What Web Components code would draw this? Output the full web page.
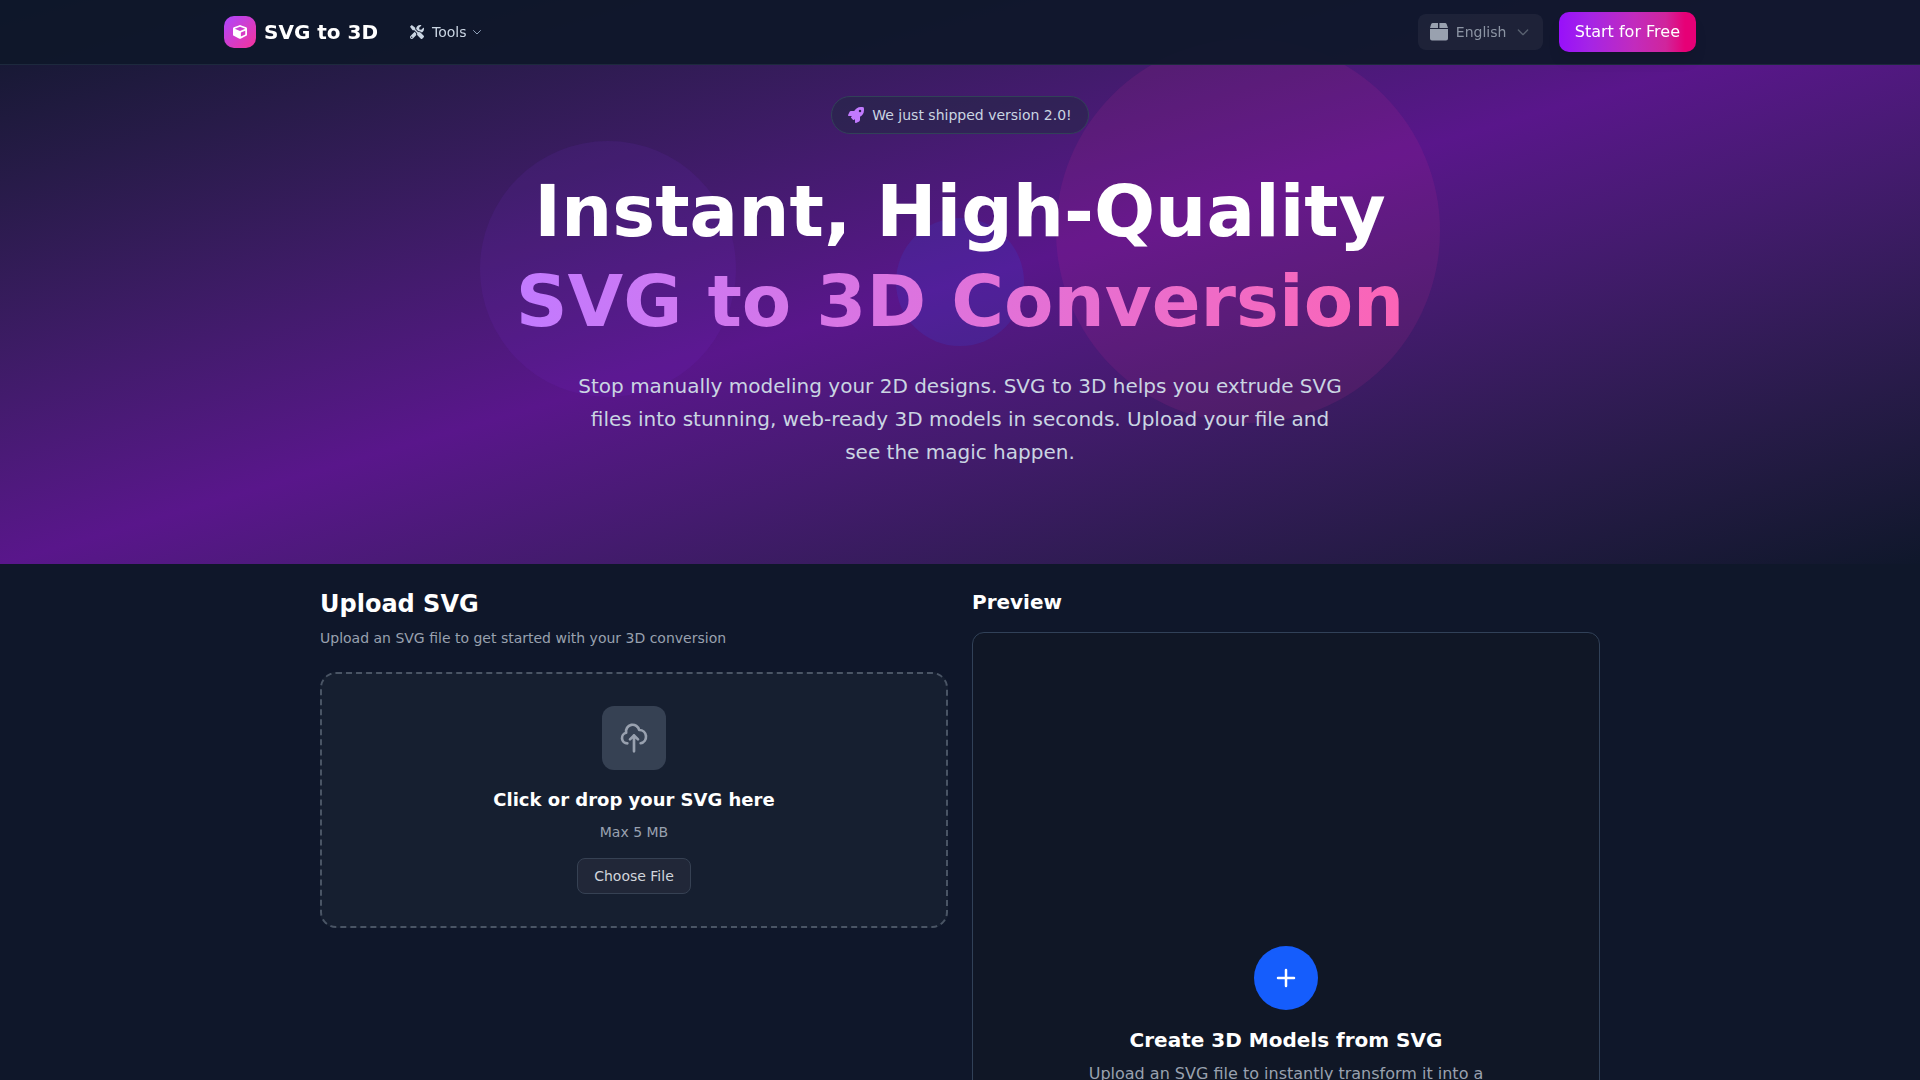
<!DOCTYPE html>
<html lang="en">
<head>
<meta charset="utf-8">
<meta name="viewport" content="width=device-width, initial-scale=1">
<title>SVG to 3D</title>
<style>
  body {
    margin: 0;
    background: #0f172a;
    color: #fff;
    font-family: "DejaVu Sans", sans-serif;
    font-size: 16px;
    line-height: 24px;
  }
</style>
</head>
<body>
<site-header></site-header>
<main>
  <hero-banner>
    <span slot="badge">We just shipped version 2.0!</span>
    <span slot="title">Instant, High-Quality</span>
    <span slot="accent">SVG to 3D Conversion</span>
    Stop manually modeling your 2D designs. SVG to 3D helps you extrude SVG files into stunning, web-ready 3D models in seconds. Upload your file and see the magic happen.
  </hero-banner>
  <converter-workspace>
    <upload-panel slot="upload"></upload-panel>
    <preview-panel slot="preview"></preview-panel>
  </converter-workspace>
</main>

<script>
// All icons used by the page: viewBox + markup
const ICONS = {
  cube: ['0 0 512 512', '<path fill="currentColor" d="M239.1 6.3l-208 78c-18.7 7-31.1 25-31.1 45v225.1c0 18.2 10.3 34.8 26.5 42.9l208 104c13.5 6.8 29.4 6.8 42.9 0l208-104c16.3-8.1 26.5-24.8 26.5-42.9V129.3c0-20-12.4-37.9-31.1-44.9l-208-78C262 2.2 250 2.2 239.1 6.3zM256 68.4l192 72v1.1l-192 78-192-78v-1.1l192-72zm32 356V275.5l160-65v133.9l-160 80z"/>'],
  tools: ['0 0 512 512', '<path fill="currentColor" d="M501.1 395.7L384 278.6c-23.1-23.1-57.6-27.6-85.4-13.9L192 158.1V96L64 0 0 64l96 128h62.1l106.6 106.6c-13.6 27.8-9.2 62.3 13.9 85.4l117.1 117.1c14.6 14.6 38.2 14.6 52.7 0l52.7-52.7c14.5-14.6 14.5-38.2 0-52.7zM331.7 225c28.3 0 54.9 11 74.9 31l19.4 19.4c15.8-6.9 30.8-16.5 43.8-29.5 37.1-37.1 49.7-89.3 37.9-136.7-2.2-9-13.5-12.1-20.1-5.5l-74.4 74.4-67.9-11.3L334 98.9l74.4-74.4c6.6-6.6 3.4-17.9-5.7-20.2-47.4-11.7-99.6.9-136.6 37.9-28.5 28.5-41.9 66.1-41.2 103.6l82.1 82.1c8.1-1.9 16.5-2.9 24.7-2.9zm-103.9 82l-56.7-56.7L18.7 402.8c-25 25-25 65.5 0 90.5s65.5 25 90.5 0l123.6-123.6c-7.6-19.9-9.9-41.6-5-62.7zM64 472c-13.2 0-24-10.8-24-24 0-13.3 10.7-24 24-24s24 10.7 24 24c0 13.2-10.7 24-24 24z"/>'],
  rocket: ['0 0 512 512', '<path fill="currentColor" d="M505.1 19.1c-1.2-5.5-6.7-11-12.2-12.2C460.7 0 435.5 0 410.4 0 307.2 0 245.3 55.2 199.1 128H94.8c-16.3 0-35.5 11.9-42.9 26.5L2.5 253.3A28.4 28.4 0 0 0 0 264a24 24 0 0 0 24 24h103.8l-22.5 22.5c-11.3 11.3-13 32.2 0 45.2l50.9 50.9c11.2 11.2 32.2 13.2 45.3 0l22.5-22.4V488a24 24 0 0 0 24 24 28.6 28.6 0 0 0 10.7-2.5l98.7-49.4c14.7-7.3 26.6-26.5 26.6-42.9V312.8c72.6-46.3 128-108.4 128-211.1.1-25.2.1-50.4-6.9-82.6zM384 168a40 40 0 1 1 40-40 40 40 0 0 1-40 40z"/>'],
  box: ['0 0 18 18', '<path fill="currentColor" d="M3 0h5v5H0l1-3.600Q1.500 0 3 0zM9.400 0H15q1.300 0 1.800 1.400L18 5H9.400zM0 6h18v9.500a2 2 0 0 1-2 2H2a2 2 0 0 1-2-2z"/>'],
  chevron: ['0 0 24 24', '<path d="M19 9l-7 7-7-7"/>'],
  upload: ['0 0 24 24', '<path d="M7 16a4 4 0 01-.88-7.903A5 5 0 1115.9 6L16 6a5 5 0 011 9.9M15 13l-3-3m0 0l-3 3m3-3v12"/>'],
  plus: ['0 0 24 24', '<path d="M12 4v16m8-8H4"/>']
};

function define(name, html) {
  const template = document.createElement('template');
  template.innerHTML = html;
  customElements.define(name, class extends HTMLElement {
    constructor() {
      super();
      this.attachShadow({ mode: 'open' });
      this.shadowRoot.appendChild(template.content.cloneNode(true));
    }
  });
}

class UiIcon extends HTMLElement {
  constructor() {
    super();
    this.attachShadow({ mode: 'open' });
  }

  connectedCallback() {
    const [box, shape] = ICONS[this.getAttribute('name')];
    this.shadowRoot.innerHTML = `
      <style>
        :host { display: block; flex: none; width: var(--size, 16px); height: var(--size, 16px); }
        svg { display: block; width: 100%; height: 100%; }
        path:not([fill]) { fill: none; stroke: currentColor; stroke-width: var(--stroke, 2); stroke-linecap: round; stroke-linejoin: round; }
      </style>
      <svg viewBox="${box}" aria-hidden="true">${shape}</svg>`;
  }
}
customElements.define('ui-icon', UiIcon);

define('language-picker', `
  <style>
    :host { display: block; }
    label {
      display: flex;
      align-items: center;
      gap: 8px;
      padding: 8px 12px;
      border-radius: 8px;
      background: rgba(255, 255, 255, 0.05);
      color: #99a1af;
    }
    select {
      appearance: none;
      border: 0;
      margin: 0;
      padding: 0;
      background: transparent;
      color: #8c94a3;
      font: inherit;
      font-size: 14px;
      line-height: 20px;
    }
    .box { --size: 18px; }
    .chevron { color: #596170; pointer-events: none; }
  </style>
  <label>
    <ui-icon class="box" name="box"></ui-icon>
    <select aria-label="Language"><option>English</option></select>
    <ui-icon class="chevron" name="chevron"></ui-icon>
  </label>
`);

define('site-header', `
  <style>
    :host {
      display: block;
      position: fixed;
      inset: 0 0 auto;
      z-index: 10;
      background: rgba(15, 23, 42, 0.95);
      border-bottom: 1px solid #1d293d;
    }
    header {
      box-sizing: border-box;
      max-width: 1536px;
      height: 64px;
      margin: 0 auto;
      padding: 0 32px;
      display: flex;
      align-items: center;
      justify-content: space-between;
    }
    .side, nav, .brand, .tools { display: flex; align-items: center; }
    .side { gap: 32px; }
    .actions { gap: 16px; }
    .brand {
      gap: 8px;
      color: #fff;
      font-size: 20px;
      line-height: 28px;
      font-weight: 700;
      text-decoration: none;
    }
    .mark {
      --size: 14px;
      display: grid;
      place-items: center;
      width: 32px;
      height: 32px;
      border-radius: 10px;
      background: linear-gradient(to bottom right, #ad46ff, #f6339a);
    }
    button {
      border: 0;
      font: inherit;
      cursor: pointer;
    }
    .tools {
      gap: 8px;
      padding: 0;
      background: none;
      color: #cad5e2;
      font-size: 14px;
      line-height: 20px;
      --size: 14px;
    }
    .tools .chevron { --size: 12px; margin-left: -4px; color: #90a1b9; }
    .start {
      padding: 8px 16px;
      border-radius: 10px;
      color: #fff;
      background: linear-gradient(to right, #9810fa, #a524e6 22%, #c22bbd 55%, #d0259c 78%, #e60076 92%);
      box-shadow: 0 10px 15px -3px rgba(0, 0, 0, 0.1), 0 4px 6px -4px rgba(0, 0, 0, 0.1);
    }
  </style>
  <header>
    <div class="side">
      <a class="brand" href="#"><span class="mark"><ui-icon name="cube"></ui-icon></span>SVG to 3D</a>
      <nav>
        <button class="tools"><ui-icon name="tools"></ui-icon>Tools<ui-icon class="chevron" name="chevron"></ui-icon></button>
      </nav>
    </div>
    <div class="side actions">
      <language-picker></language-picker>
      <button class="start">Start for Free</button>
    </div>
  </header>
`);

define('hero-banner', `
  <style>
    :host {
      display: block;
      position: relative;
      overflow: hidden;
      padding: 96px 32px 95px;
      text-align: center;
      background: linear-gradient(to bottom right in oklab, #0f172b, #59168b, #0f172b);
    }
    /* decorative circles behind the copy */
    .orb { position: absolute; border-radius: 50%; }
    .purple { top: 25%; left: 25%; width: 256px; height: 256px; background: rgba(130, 50, 230, 0.1); }
    .pink { right: 25%; bottom: 25%; width: 384px; height: 384px; background: rgba(246, 51, 154, 0.1); }
    .blue {
      top: 50%;
      left: 50%;
      width: 128px;
      height: 128px;
      transform: translate(-50%, -50%);
      background: rgba(43, 90, 255, 0.14);
    }
    .content {
      position: relative;
      display: flex;
      flex-direction: column;
      align-items: center;
    }
    .badge {
      display: flex;
      align-items: center;
      gap: 8px;
      padding: 8px 16px;
      border: 1px solid #314158;
      border-radius: 20px;
      background: rgba(29, 41, 61, 0.5);
      color: #cad5e2;
      font-size: 14px;
      line-height: 20px;
    }
    .badge ui-icon { color: #c27aff; }
    h1 {
      margin: 32px 0 24px;
      font-size: 72px;
      line-height: 90px;
      font-weight: 700;
    }
    .accent {
      display: block;
      color: transparent;
      background: linear-gradient(to right in oklab, #c27aff, #fb64b6);
      background-clip: text;
      -webkit-background-clip: text;
    }
    p {
      max-width: 768px;
      margin: 0;
      color: #cad5e2;
      font-size: 20px;
      line-height: 33px;
    }
  </style>
  <div class="orb purple"></div>
  <div class="orb pink"></div>
  <div class="orb blue"></div>
  <div class="content">
    <div class="badge"><ui-icon name="rocket"></ui-icon><slot name="badge"></slot></div>
    <h1><slot name="title"></slot><span class="accent"><slot name="accent"></slot></span></h1>
    <p><slot></slot></p>
  </div>
`);

define('converter-workspace', `
  <style>
    :host {
      display: grid;
      grid-template-columns: repeat(2, minmax(0, 1fr));
      gap: 24px;
      max-width: 1280px;
      margin: 0 auto;
      padding: 24px 0;
    }
  </style>
  <slot name="upload"></slot>
  <slot name="preview"></slot>
`);

define('upload-panel', `
  <style>
    :host { display: block; }
    h2, h3, p { margin: 0; }
    h2 { font-size: 24px; line-height: 32px; }
    h3 { margin: 16px 0 8px; font-size: 18px; line-height: 28px; }
    p { color: #99a1af; font-size: 14px; line-height: 20px; }
    h2 + p { margin: 8px 0 24px; }
    .dropzone {
      display: flex;
      flex-direction: column;
      align-items: center;
      padding: 32px;
      border: 2px dashed #4a5565;
      border-radius: 16px;
      background: #161f30;
    }
    .tile {
      --size: 32px;
      display: grid;
      place-items: center;
      width: 64px;
      height: 64px;
      border-radius: 12px;
      background: #364153;
      color: #99a1af;
    }
    button {
      margin-top: 16px;
      padding: 7px 16px;
      border: 1px solid #364153;
      border-radius: 8px;
      background: #212738;
      color: #d1d5dc;
      font: inherit;
      font-size: 14px;
      line-height: 20px;
      cursor: pointer;
    }
  </style>
  <h2>Upload SVG</h2>
  <p>Upload an SVG file to get started with your 3D conversion</p>
  <div class="dropzone">
    <div class="tile"><ui-icon name="upload"></ui-icon></div>
    <h3>Click or drop your SVG here</h3>
    <p>Max 5 MB</p>
    <button>Choose File</button>
  </div>
`);

define('preview-panel', `
  <style>
    :host { display: block; }
    h2, h3, p { margin: 0; font-size: 20px; line-height: 28px; }
    .stage {
      box-sizing: border-box;
      min-height: 792px;
      margin-top: 16px;
      display: flex;
      flex-direction: column;
      align-items: center;
      justify-content: center;
      border: 1px solid #314158;
      border-radius: 12px;
      background: #101726;
      text-align: center;
    }
    .add {
      --size: 24px;
      --stroke: 2.5;
      display: grid;
      place-items: center;
      width: 64px;
      height: 64px;
      border-radius: 50%;
      background: #155dfc;
    }
    h3 { margin: 16px 0 8px; }
    p {
      max-width: 400px;
      color: #99a1af;
      font-size: 16px;
      line-height: 24px;
    }
  </style>
  <h2>Preview</h2>
  <div class="stage">
    <div class="add"><ui-icon name="plus"></ui-icon></div>
    <h3>Create 3D Models from SVG</h3>
    <p>Upload an SVG file to instantly transform it into a 3D model</p>
  </div>
`);
</script>
</body>
</html>
